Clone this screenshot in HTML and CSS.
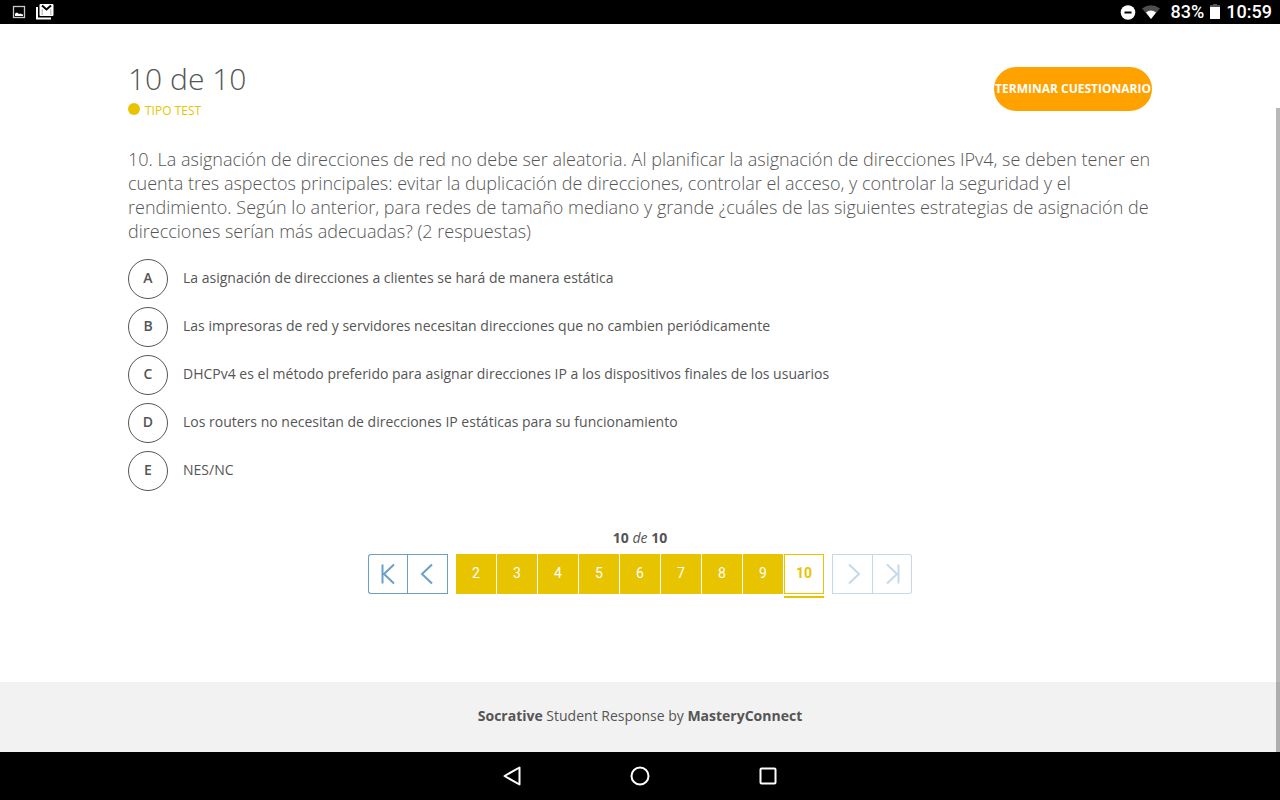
FILE: index.html
```html
<!DOCTYPE html>
<html lang="es">
<head>
<meta charset="utf-8">
<meta name="viewport" content="width=device-width, initial-scale=1">
<title>Socrative Student</title>
<link rel="stylesheet" href="styles.css">
</head>
<body>
<div class="status-bar">
  <div class="status-group">
    <svg class="icon-photo" width="14" height="14" viewBox="0 0 14 14"><rect x="1.500" y="1.500" width="11" height="11" fill="none" stroke="#c8c8c8" stroke-width="1.300"/><path d="M3 11V8.500L5 7.500l2 1.500 1-.5 3 1V11z" fill="#fff"/></svg>
    <svg class="icon-mail" width="18" height="16" viewBox="0 0 18 16"><path d="M1 3v11.500h14" fill="none" stroke="#fff" stroke-width="2"/><rect x="3.500" y="0" width="14" height="12" rx="1" fill="#fff"/><path d="M6 1.500l4.500 4 4.500-4" fill="none" stroke="#000" stroke-width="2"/><path d="M6.200 5v6M14.800 5v6" stroke="#888" stroke-width=".7"/></svg>
  </div>
  <div class="status-group">
    <svg width="16" height="16" viewBox="0 0 16 16"><circle cx="8" cy="8.500" r="7.300" fill="#fff"/><path d="M4.500 8.500h7" stroke="#000" stroke-width="2"/></svg>
    <svg class="icon-wifi" width="18" height="14" viewBox="0 0 18 14"><path d="M0 3.500Q9-3 18 3.500L9 14z" fill="#4d4d4d"/><path d="M4 7.500Q9 3.500 14 7.500L9 14z" fill="#fff"/></svg>
    <span class="status-text">83%</span>
    <svg class="icon-battery" width="10" height="15" viewBox="0 0 10 15"><path d="M0 1h3V0h4v1h3v2H0z" fill="#555"/><path d="M0 3h10v12H0z" fill="#fff"/></svg>
    <span class="status-text">10:59</span>
  </div>
</div>
<main class="quiz">
  <header class="quiz-header">
    <div>
      <h1 class="quiz-title">10 de 10</h1>
      <div class="quiz-type"><span class="dot"></span>TIPO TEST</div>
    </div>
    <button class="finish" type="button">TERMINAR CUESTIONARIO</button>
  </header>
  <p class="question">10. La asignación de direcciones de red no debe ser aleatoria. Al planificar la asignación de direcciones IPv4, se deben tener en cuenta tres aspectos principales: evitar la duplicación de direcciones, controlar el acceso, y controlar la seguridad y el rendimiento. Según lo anterior, para redes de tamaño mediano y grande ¿cuáles de las siguientes estrategias de asignación de direcciones serían más adecuadas? (2 respuestas)</p>
  <ul class="answers">
    <li class="answer"><button class="letter" id="a" type="button">A</button><label class="answer-text" for="a">La asignación de direcciones a clientes se hará de manera estática</label></li>
    <li class="answer"><button class="letter" id="b" type="button">B</button><label class="answer-text" for="b">Las impresoras de red y servidores necesitan direcciones que no cambien periódicamente</label></li>
    <li class="answer"><button class="letter" id="c" type="button">C</button><label class="answer-text" for="c">DHCPv4 es el método preferido para asignar direcciones IP a los dispositivos finales de los usuarios</label></li>
    <li class="answer"><button class="letter" id="d" type="button">D</button><label class="answer-text" for="d">Los routers no necesitan de direcciones IP estáticas para su funcionamiento</label></li>
    <li class="answer"><button class="letter" id="e" type="button">E</button><label class="answer-text" for="e">NES/NC</label></li>
  </ul>
  <div class="progress"><b>10</b> <em>de</em> <b>10</b></div>
  <nav class="pager" aria-label="Preguntas">
    <div class="steps">
      <button class="step step-first" type="button" aria-label="Primera"><svg width="40" height="40" viewBox="0 0 40 40"><path d="M14.500 10.500v19M26 10.500L16 20l10 9.500"/></svg></button>
      <button class="step" type="button" aria-label="Anterior"><svg width="40" height="40" viewBox="0 0 40 40"><path d="M24 10.500L14 20l10 9.500"/></svg></button>
    </div>
    <div class="pages">
      <button class="page" type="button">2</button>
      <button class="page" type="button">3</button>
      <button class="page" type="button">4</button>
      <button class="page" type="button">5</button>
      <button class="page" type="button">6</button>
      <button class="page" type="button">7</button>
      <button class="page" type="button">8</button>
      <button class="page" type="button">9</button>
      <button class="page page-current" type="button" aria-current="page">10</button>
    </div>
    <div class="steps steps-off">
      <button class="step" type="button" aria-label="Siguiente" disabled><svg width="40" height="40" viewBox="0 0 40 40"><path d="M16 10.500L26 20l-10 9.500"/></svg></button>
      <button class="step step-last" type="button" aria-label="Última" disabled><svg width="40" height="40" viewBox="0 0 40 40"><path d="M26.500 10.500v19M15 10.500L25 20l-10 9.500"/></svg></button>
    </div>
  </nav>
</main>
<footer class="footer"><b>Socrative</b> Student Response by <b>MasteryConnect</b></footer>
<div class="nav-bar">
  <button class="nav-button" type="button" aria-label="Atrás"><svg width="24" height="24" viewBox="0 0 24 24"><path d="M19.500 3.500v17L4.500 12z"/></svg></button>
  <button class="nav-button" type="button" aria-label="Inicio"><svg width="24" height="24" viewBox="0 0 24 24"><circle cx="12" cy="12" r="8.500"/></svg></button>
  <button class="nav-button" type="button" aria-label="Recientes"><svg width="24" height="24" viewBox="0 0 24 24"><rect x="4.500" y="4.500" width="15" height="15" rx="1"/></svg></button>
</div>
<div class="scroll-thumb"></div>
</body>
</html>
```

FILE: styles.css
```css
* { box-sizing: border-box; }
body {
  position: relative;
  display: flex;
  flex-direction: column;
  min-height: 100vh;
  margin: 0;
  background: #fff;
  color: #555;
  font: 14px/20px "Open Sans", sans-serif;
}
button {
  margin: 0;
  padding: 0;
  border: 0;
  background: none;
  color: inherit;
  font: inherit;
}
svg { display: block; }
.status-bar {
  display: flex;
  justify-content: space-between;
  height: 24px;
  padding: 0 8px 0 12px;
  background: #000;
  color: #fff;
  font: 500 18px/24px Roboto, sans-serif;
}
.status-group { display: flex; align-items: center; }
.icon-mail { margin-left: 10px; }
.icon-wifi { margin: 0 11px 0 6px; }
.icon-battery { margin: 0 6px 2px; }
.quiz { flex: 1; width: 80%; margin: 0 auto; padding-top: 35px; }
.quiz-header { display: flex; justify-content: space-between; }
.quiz-title {
  margin: 0;
  font-size: 30px;
  font-weight: 300;
  line-height: 40px;
}
.quiz-type {
  display: flex;
  align-items: center;
  gap: 5px;
  color: #e8c400;
  font-size: 12px;
  line-height: 24px;
}
.dot {
  width: 12px;
  height: 12px;
  margin-bottom: 4px;
  border-radius: 50%;
  background: #e8c400;
}
.finish {
  height: 44px;
  margin-top: 8px;
  padding: 0 1px;
  border-radius: 22px;
  background: #ffa200;
  color: #fff;
  font-size: 12px;
  font-weight: 700;
  white-space: nowrap;
}
.question {
  margin: 24px 0 16px;
  font-size: 18px;
  font-weight: 300;
  line-height: 24px;
}
.answers {
  display: grid;
  gap: 8px;
  margin: 0;
  padding: 0;
  list-style: none;
}
.answer { display: flex; gap: 15px; align-items: center; }
.letter {
  flex: none;
  width: 40px;
  height: 40px;
  padding-bottom: 2px;
  border: 1px solid #555;
  border-radius: 50%;
  font-size: 14px;
  font-weight: 600;
}
.answer-text { padding-bottom: 2px; }
.progress { margin-top: 37px; text-align: center; }
.pager {
  display: flex;
  justify-content: center;
  gap: 8px;
  margin: 6px 0 60px;
}
.steps { display: flex; color: #6a9fc9; }
.steps-off { color: #c5d9e8; }
.step {
  display: flex;
  align-items: center;
  justify-content: center;
  width: 41px;
  height: 40px;
  border: 1px solid currentColor;
}
.step svg { flex: none; fill: none; stroke: currentColor; stroke-width: 2; }
.step-first { width: 39px; border-right: 0; border-radius: 3px 0 0 3px; }
.step-last { width: 39px; border-left: 0; border-radius: 0 3px 3px 0; }
.pages { display: flex; gap: 1px; }
.page {
  width: 40px;
  height: 40px;
  padding-bottom: 2px;
  background: #e8c400;
  color: #fff;
  font: 14px/20px Roboto, sans-serif;
}
.page-current {
  border: 1px solid #e8c400;
  background: #fff;
  box-shadow: 0 2px #fff, 0 4px #e8c400;
  color: #e8c400;
  font-weight: 700;
}
.footer {
  padding: 24px 0 26px;
  background: #f2f2f2;
  text-align: center;
}
.nav-bar {
  display: flex;
  justify-content: center;
  gap: 104px;
  padding: 12px 0;
  background: #000;
  color: #fff;
}
.nav-button svg { fill: none; stroke: currentColor; stroke-width: 2; stroke-linejoin: round; }
.scroll-thumb {
  position: absolute;
  top: 108px;
  right: 0;
  bottom: 48px;
  width: 4px;
  background: rgba(0, 0, 0, 0.28);
}
```
